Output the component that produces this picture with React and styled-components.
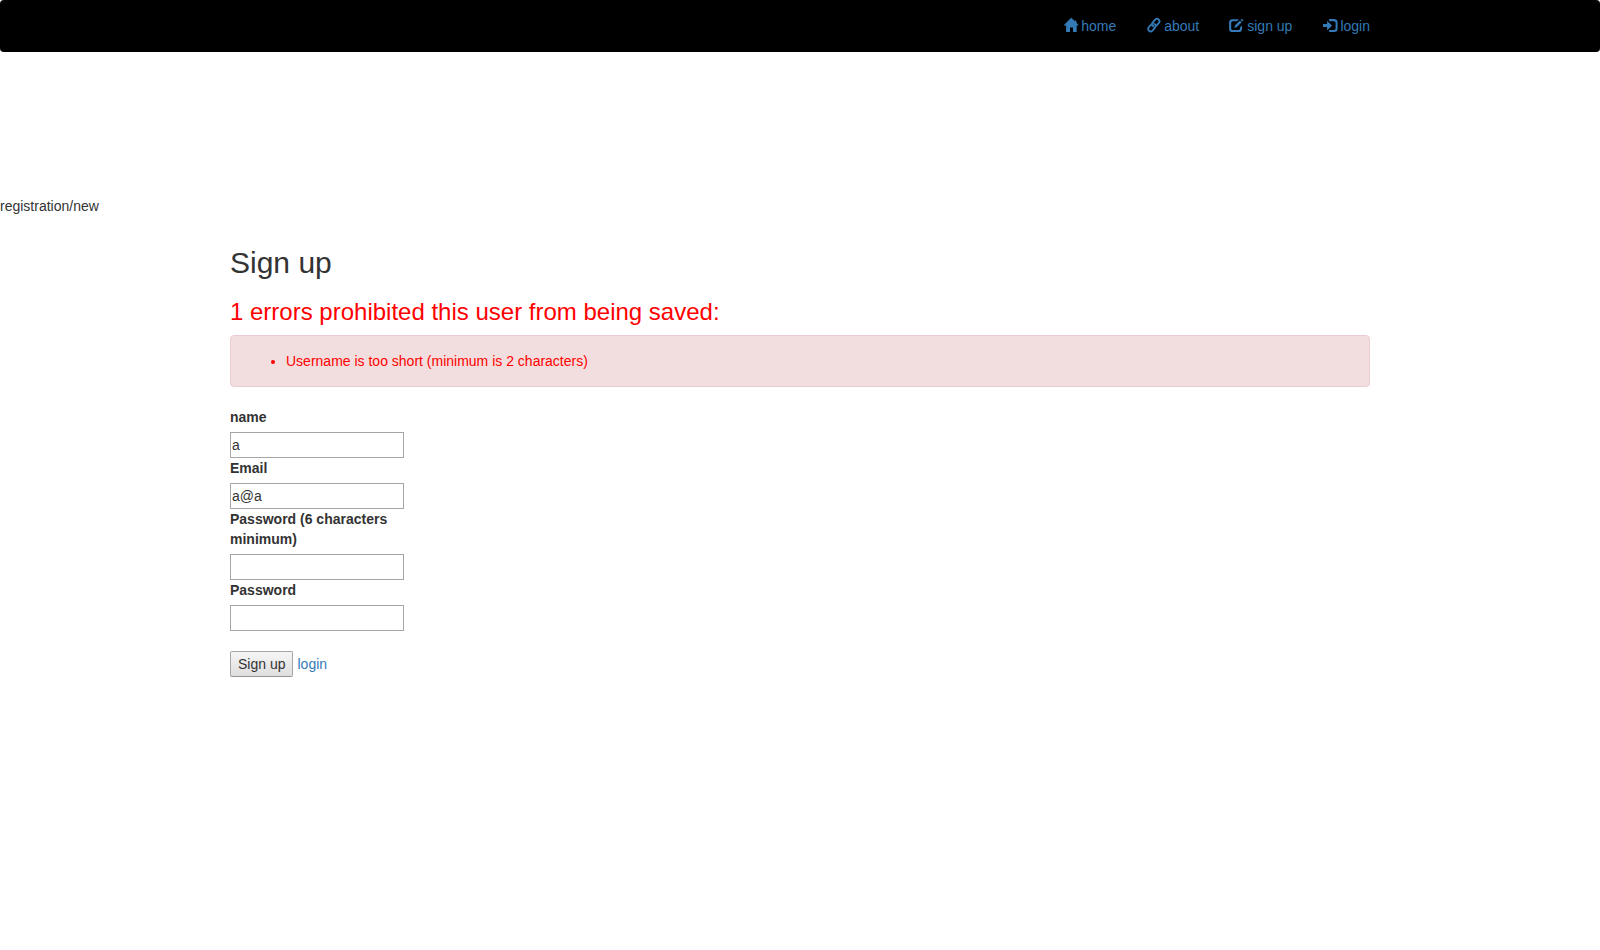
import React from "react";
import styled, { createGlobalStyle } from "styled-components";

const GlobalStyle = createGlobalStyle`
  *, *::before, *::after {
    box-sizing: border-box;
  }
  body {
    margin: 0;
    background: #fff;
    color: #333;
    font-family: "Liberation Sans", Arial, sans-serif;
    font-size: 14px;
    line-height: 20px;
  }
`;

const Container = styled.div`
  max-width: 1170px;
  margin: 0 auto;
  padding: 0 15px;
`;

const NavBar = styled.nav`
  padding: 1px 0;
  background: #000;
  border-radius: 4px;
`;

const NavList = styled.ul`
  display: flex;
  justify-content: flex-end;
  gap: 30px;
  margin: 0;
  padding: 15px 0;
  list-style: none;
`;

const Link = styled.a`
  color: #337ab7;
  text-decoration: none;

  &:hover {
    text-decoration: underline;
  }
`;

const NavLink = styled(Link)`
  display: flex;
  align-items: center;
  gap: 4px;
`;

const Icon = styled.svg`
  width: 14px;
  height: 14px;
  fill: currentColor;
  overflow: visible;
`;

const Route = styled.div`
  margin-top: 144px;
`;

const Title = styled.h2`
  margin: 30px 0 20px;
  font-size: 30px;
  font-weight: 500;
  line-height: 33px;
`;

const ErrorTitle = styled.h3`
  margin: 0 0 10px;
  color: #f00;
  font-size: 24px;
  font-weight: 500;
  line-height: 26px;
`;

const Alert = styled.div`
  margin-bottom: 20px;
  padding: 15px;
  color: #f00;
  background: #f2dede;
  border: 1px solid #ebccd1;
  border-radius: 4px;
`;

const ErrorList = styled.ul`
  margin: 0;
  padding-left: 40px;
`;

const Form = styled.form`
  display: flex;
  flex-direction: column;
  align-items: flex-start;
`;

const Field = styled.div`
  width: 174px;
`;

const Label = styled.label`
  display: block;
  margin-bottom: 5px;
  font-weight: 700;
`;

const Input = styled.input`
  display: block;
  width: 100%;
  height: 26px;
  padding: 1px;
  color: inherit;
  font: inherit;
  background: #fff;
  border: 1px solid #a6a6a6;
  border-radius: 0;
`;

const Actions = styled.div`
  display: flex;
  align-items: center;
  gap: 4px;
  margin-top: 20px;
`;

const Button = styled.button`
  height: 26px;
  padding: 0 7px;
  color: inherit;
  font: inherit;
  background: linear-gradient(#f6f6f6, #dedede);
  border: 1px solid #a6a6a6;
  border-bottom-color: #949494;
  border-radius: 2px;
`;

const navItems = [
  {
    label: "home",
    icon: <path d="M7.9-1.1q.3-.3.6 0L12 2.2V1.5h1.3v2.1l2.1 2.4q.4.6-.3.6h-1.4v6.1q0 .4-.4.4H10V8.5H7v4.6H3.5q-.4 0-.4-.4V6.6H1.3Q.6 6.6 1 6z" />,
  },
  {
    label: "about",
    icon: (
      <g fill="none" stroke="currentColor" strokeWidth="1.8" strokeLinecap="round">
        <path d="M7.7 7.4C5.9 6.9 5.3 5.1 6.4 3.8L8.9.9C10-.3 11.6-.5 12.6.4c1.2 1.1 1.2 2.6.1 3.8l-2 2.2" />
        <path d="M7.9 4.8c1.8.5 2.4 2.3 1.3 3.6l-2.5 2.9c-1.1 1.2-2.7 1.4-3.7.5-1.2-1.1-1.2-2.6-.1-3.8l2-2.2" />
      </g>
    ),
  },
  {
    label: "sign up",
    icon: (
      <>
        <path d="M10 .2H3.5A3.4 3.4 0 0 0 .1 3.6v6.1a3.4 3.4 0 0 0 3.4 3.4h6.1a3.4 3.4 0 0 0 3.4-3.4V6.5l-2 2v.9a1.6 1.6 0 0 1-1.6 1.6H3.8a1.6 1.6 0 0 1-1.6-1.6V3.9a1.6 1.6 0 0 1 1.6-1.6h4.1z" />
        <path d="m10.9 1.5 1.8 1.8-4.8 4.8-2.6.8.8-2.6zM11.6.8l.9-.9q.2-.2.4 0l1.4 1.4q.2.2 0 .4l-.9.9z" />
      </>
    ),
  },
  {
    label: "login",
    icon: (
      <>
        <path d="M7.1.1h5A3.5 3.5 0 0 1 15.6 3.6v5.9a3.5 3.5 0 0 1-3.5 3.5h-5v-2.1h4.8a1.7 1.7 0 0 0 1.7-1.7V3.9a1.7 1.7 0 0 0-1.7-1.7H7.1z" />
        <path d="M5.1 2.5q0-.5.4-.2l4.2 4q.3.3 0 .6l-4.2 4q-.4.3-.4-.2V8.1H1.4q-.4 0-.4-.4V5.5q0-.4.4-.4h3.7z" />
      </>
    ),
  },
];

const fields = [
  { id: "username", label: "name", type: "text", value: "a" },
  { id: "email", label: "Email", type: "text", value: "a@a" },
  { id: "password", label: "Password (6 characters minimum)", type: "password", value: "" },
  { id: "password-confirmation", label: "Password", type: "password", value: "" },
];

export default function App() {
  return (
    <>
      <GlobalStyle />
      <NavBar>
        <Container>
          <NavList>
            {navItems.map(({ label, icon }) => (
              <li key={label}>
                <NavLink href="#">
                  <Icon viewBox="0 0 14 14" aria-hidden="true">
                    {icon}
                  </Icon>
                  {label}
                </NavLink>
              </li>
            ))}
          </NavList>
        </Container>
      </NavBar>
      <Route>registration/new</Route>
      <Container as="main">
        <Title>Sign up</Title>
        <ErrorTitle>1 errors prohibited this user from being saved:</ErrorTitle>
        <Alert role="alert">
          <ErrorList>
            <li>Username is too short (minimum is 2 characters)</li>
          </ErrorList>
        </Alert>
        <Form onSubmit={(event) => event.preventDefault()}>
          {fields.map(({ id, label, type, value }) => (
            <Field key={id}>
              <Label htmlFor={id}>{label}</Label>
              <Input id={id} type={type} defaultValue={value} />
            </Field>
          ))}
          <Actions>
            <Button type="submit">Sign up</Button>
            <Link href="#">login</Link>
          </Actions>
        </Form>
      </Container>
    </>
  );
}
